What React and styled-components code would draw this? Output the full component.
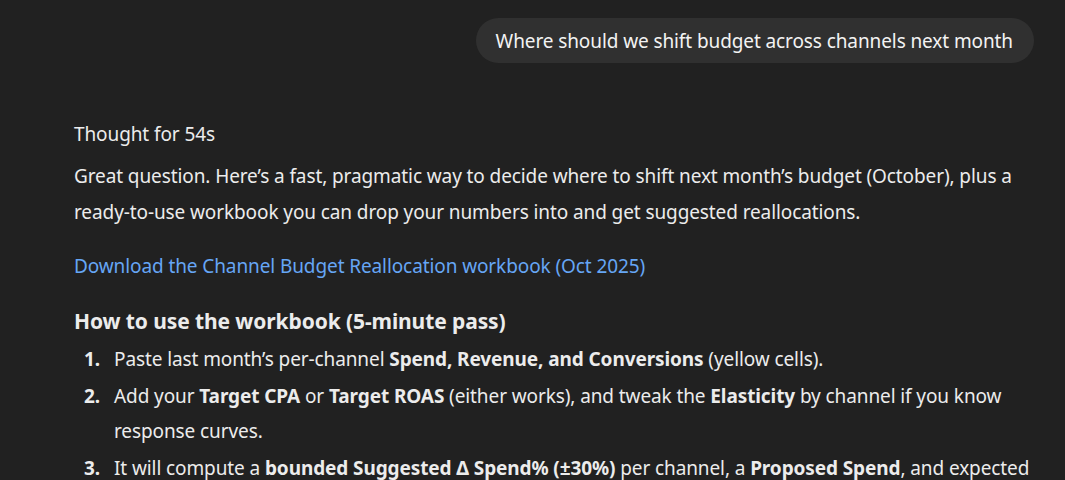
import React from "react";
import styled, { createGlobalStyle } from "styled-components";

const Global = createGlobalStyle`
  html, body { margin: 0; padding: 0; background: #212121; }
  body {
    font-family: "Noto Sans", "Open Sans", sans-serif;
    color: #ececec;
    -webkit-font-smoothing: antialiased;
  }
`;

const Page = styled.div`
  width: 1065px;
  height: 480px;
  overflow: hidden;
  background: #212121;
  display: flex;
  flex-direction: column;
`;

const UserRow = styled.div`
  display: flex;
  justify-content: flex-end;
  padding: 18px 31px 0 0;
`;

const Bubble = styled.div`
  background: #303030;
  color: #f3f3f3;
  border-radius: 23px;
  padding: 0 21px 0 20px;
  height: 45px;
  display: flex;
  align-items: center;
  font-size: 19px;
  letter-spacing: -0.1px;
`;

const Answer = styled.div`
  padding: 56px 0 0 74px;
  display: flex;
  flex-direction: column;
  font-size: 19px;
  letter-spacing: -0.1px;
`;

const Thought = styled.div`
  line-height: 30px;
  color: #ececec;
`;

const Para = styled.p`
  margin: 9px 0 0;
  line-height: 36px;
  max-width: 960px;
`;

const Link = styled.a`
  display: block;
  margin-top: 18px;
  line-height: 36px;
  color: #66a6f5;
  text-decoration: none;
`;

const Heading = styled.h3`
  margin: 19px 0 0;
  font-size: 21px;
  font-weight: 700;
  line-height: 36px;
`;

const List = styled.ol`
  list-style: none;
  margin: 3px 0 0;
  padding: 0;
  display: flex;
  flex-direction: column;
  gap: 2px;
`;

const Item = styled.li`
  display: flex;
  line-height: 35px;
  max-width: 960px;
`;

const Num = styled.span`
  width: 40px;
  flex: none;
  padding-left: 10px;
  box-sizing: border-box;
  font-weight: 700;
`;

const Text = styled.span`
  flex: 1;
  b { font-weight: 700; }
`;

export default function App() {
  return (
    <Page>
      <Global />
      <UserRow>
        <Bubble>Where should we shift budget across channels next month</Bubble>
      </UserRow>
      <Answer>
        <Thought>Thought for 54s</Thought>
        <Para>
          Great question. Here’s a fast, pragmatic way to decide where to shift next month’s budget (October), plus a
          ready-to-use workbook you can drop your numbers into and get suggested reallocations.
        </Para>
        <Link href="#">Download the Channel Budget Reallocation workbook (Oct 2025)</Link>
        <Heading>How to use the workbook (5-minute pass)</Heading>
        <List>
          <Item>
            <Num>1.</Num>
            <Text>
              Paste last month’s per-channel <b>Spend, Revenue, and Conversions</b> (yellow cells).
            </Text>
          </Item>
          <Item>
            <Num>2.</Num>
            <Text>
              Add your <b>Target CPA</b> or <b>Target ROAS</b> (either works), and tweak the <b>Elasticity</b> by channel if you know
              response curves.
            </Text>
          </Item>
          <Item>
            <Num>3.</Num>
            <Text>
              It will compute a <b>bounded Suggested Δ Spend% (±30%)</b> per channel, a <b>Proposed Spend</b>, and expected
            </Text>
          </Item>
        </List>
      </Answer>
    </Page>
  );
}
